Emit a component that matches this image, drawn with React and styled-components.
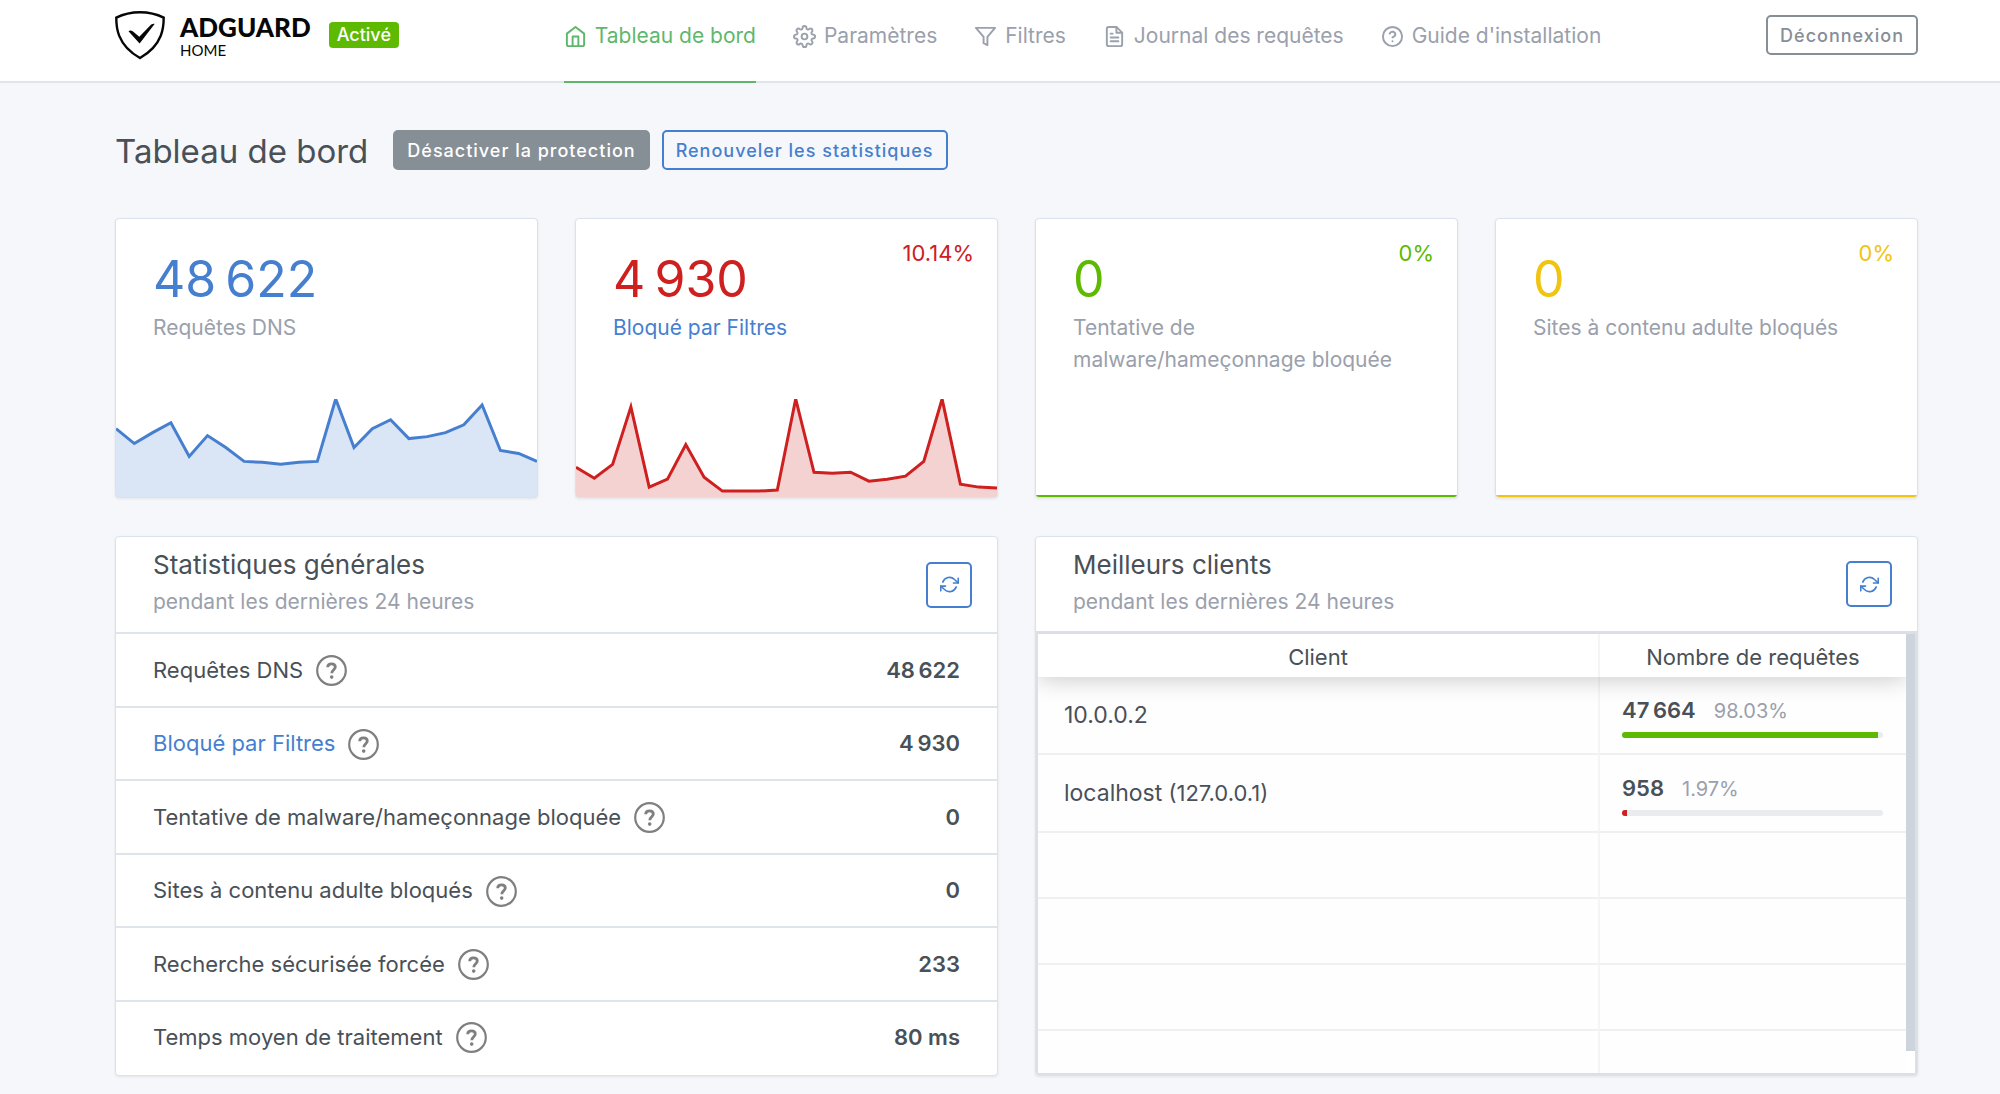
import React, { Fragment } from 'react';
import styled, { createGlobalStyle } from 'styled-components';
import { FiHome, FiSettings, FiFilter, FiFileText, FiHelpCircle, FiRefreshCw } from 'react-icons/fi';

const GlobalStyle = createGlobalStyle`
  * {
    box-sizing: border-box;
  }
  body {
    margin: 0;
    background: #f5f7fb;
    color: #495057;
    font-family: Inter, "Liberation Sans", sans-serif;
    font-size: 21px;
    line-height: 32px;
  }
  a {
    color: #467fcf;
    text-decoration: none;
  }
  button {
    font-family: inherit;
    cursor: pointer;
  }
  h1, h2, p {
    margin: 0;
    font-weight: 400;
  }
`;

const Header = styled.header`
  display: flex;
  justify-content: space-between;
  padding: 0 82px 0 115px;
  background: #fff;
  border-bottom: 2px solid #dfe4ed;
`;

const Brand = styled.div`
  display: flex;
  align-items: center;
  align-self: flex-start;
  height: 70px;
`;

const BrandName = styled.div`
  display: flex;
  flex-direction: column;
  margin: 0 18px 0 15px;
  padding-top: 4px;
  font-family: Lato, sans-serif;
  color: #060606;
`;

const BrandTitle = styled.span`
  font-size: 26px;
  font-weight: 900;
  line-height: 26px;
`;

const BrandSub = styled.span`
  font-size: 15px;
  line-height: 20px;
`;

const Badge = styled.span`
  padding: 0 8px;
  border-radius: 4px;
  background: #5eba00;
  color: #fff;
  font-size: 18px;
  font-weight: 500;
  line-height: 26px;
`;

const Nav = styled.nav`
  display: flex;
  gap: 37px;
`;

const NavLink = styled.a`
  display: flex;
  align-items: center;
  gap: 8px;
  margin-bottom: -2px;
  padding: 20px 0 29px;
  border-bottom: 2px solid ${props => (props.$active ? '#5fb76c' : 'transparent')};
  color: ${props => (props.$active ? '#5fb76c' : '#9aa0ac')};
`;

const buttonColors = {
  gray: 'background: #868e96; border-color: #868e96; color: #fff;',
  grayOutline: 'background: transparent; border-color: #868e96; color: #868e96;',
  blueOutline: 'background: transparent; border-color: #467fcf; color: #467fcf;',
};

const Button = styled.button`
  height: 40px;
  padding: 0 12px;
  border: 2px solid;
  border-radius: 5px;
  font-size: 18px;
  font-weight: 500;
  letter-spacing: 1px;
  ${props => buttonColors[props.$kind]}
`;

const LogoutWrap = styled.div`
  display: flex;
  align-items: center;
  height: 70px;
`;

const Main = styled.main`
  padding: 45px 82px 20px 115px;
`;

const PageHeader = styled.div`
  display: flex;
  align-items: center;
  gap: 12px;
  margin-bottom: 46px;
`;

const PageTitle = styled.h1`
  margin-right: 13px;
  padding-top: 2px;
  font-size: 33px;
  line-height: 42px;
`;

const Cards = styled.div`
  display: grid;
  grid-template-columns: repeat(4, 1fr);
  gap: 37px;
  margin-bottom: 38px;
`;

const Card = styled.section`
  display: flex;
  flex-direction: column;
  min-width: 0;
  overflow: hidden;
  background: #fff;
  border: 1px solid #dce2ec;
  border-radius: 4px;
  box-shadow: 0 1px 3px rgba(0, 0, 0, 0.08);
`;

const StatCard = styled(Card)`
  position: relative;
  min-height: 280px;
`;

const StatBody = styled.div`
  padding: 34px 37px 0;
`;

const StatValue = styled.div`
  color: ${props => props.$color};
  font-size: 50px;
  line-height: 52px;
`;

const StatLabel = styled.p`
  margin-top: 7px;
  color: #9aa0ac;
`;

const StatPercent = styled.div`
  position: absolute;
  top: 18px;
  right: 23px;
  color: ${props => props.$color};
  font-size: 22px;
`;

const ChartSvg = styled.svg`
  display: block;
  width: 100%;
  height: 98px;
  margin-top: auto;
`;

const Panels = styled.div`
  display: grid;
  grid-template-columns: repeat(2, 1fr);
  gap: 37px;
`;

const PanelHeader = styled.div`
  display: flex;
  align-items: center;
  justify-content: space-between;
  height: ${props => (props.$short ? '94px' : '95px')};
  padding: 0 25px 0 37px;
`;

const PanelTitle = styled.h2`
  margin-top: -5px;
  font-size: 26px;
  line-height: 40px;
`;

const PanelSub = styled.p`
  color: #9aa0ac;
  line-height: 34px;
`;

const RefreshButton = styled.button`
  display: flex;
  align-items: center;
  justify-content: center;
  width: 46px;
  height: 46px;
  padding: 0;
  background: #fff;
  border: 2px solid #467fcf;
  border-radius: 5px;
  color: #467fcf;
`;

const StatsTable = styled.table`
  width: 100%;
  height: 440px;
  border-collapse: collapse;
  font-size: 22px;

  th, td {
    padding: 0 37px;
    border-top: 2px solid #dfe4ea;
  }
  th {
    font-weight: 400;
    text-align: left;
  }
  td {
    font-weight: 600;
    text-align: right;
  }
`;

const StatName = styled.div`
  display: flex;
  align-items: center;
  gap: 13px;

  svg {
    margin-top: 2px;
  }
`;

const TableBox = styled.div`
  display: flex;
  flex: 1;
  border: 2px solid #dcdfe4;
  border-top-width: 3px;
`;

const ClientsTable = styled.table`
  flex: 1;
  width: 100%;
  border-spacing: 0;
  table-layout: fixed;
  background: #fefefe;
  font-size: 22px;
  /* keeps the header shadow inside the table */
  clip-path: inset(0);

  thead {
    position: relative;
    background: #fff;
    box-shadow: 0 3px 23px rgba(0, 0, 0, 0.2);
  }
  th {
    height: 43px;
    padding: 2px 0 0;
    font-weight: 400;
  }
  th:last-child {
    width: 308px;
  }
  th + th, td + td {
    border-left: 2px solid #f5f5f5;
  }
  td {
    height: 66px;
    padding: 0 23px 0 26px;
    border-bottom: 2px solid #f0f0f0;
  }
  td + td {
    padding-left: 22px;
  }
  tbody tr:last-child td {
    height: 42px;
    border-bottom: 0;
  }
`;

const ClientRow = styled.tr`
  td {
    height: 78px;
  }
`;

const ClientName = styled.span`
  font-size: 23px;
`;

const Counter = styled.div`
  display: flex;
  align-items: baseline;
  gap: 18px;
  padding-top: 2px;
  line-height: 30px;

  strong {
    font-weight: 600;
  }
`;

const Percent = styled.span`
  color: #9aa0ac;
  font-size: 20px;
`;

const Track = styled.div`
  height: 6px;
  margin-top: 6px;
  overflow: hidden;
  border-radius: 3px;
  background: #e9ecef;
`;

const Bar = styled.div`
  height: 100%;
  background: ${props => props.$color};
`;

const ScrollTrack = styled.div`
  width: 9px;
  background: #fff;
`;

const ScrollThumb = styled.div`
  height: 95%;
  background: #cdd4dc;
`;

const navItems = [
  { title: 'Tableau de bord', icon: FiHome, active: true },
  { title: 'Paramètres', icon: FiSettings },
  { title: 'Filtres', icon: FiFilter },
  { title: 'Journal des requêtes', icon: FiFileText },
  { title: "Guide d'installation", icon: FiHelpCircle },
];

// chart points are distances from the top of the chart, one per hour
const flat = new Array(24).fill(98.5);
const cards = [
  {
    value: '48\u202f622',
    label: 'Requêtes DNS',
    color: '#467fcf',
    points: [30, 45, 34, 24, 58, 37, 49, 63, 64, 66, 64, 63, 0, 49, 30, 21, 40, 38, 34, 26, 6, 52, 55, 63],
  },
  {
    value: '4\u202f930',
    label: <a href="#filters">Bloqué par Filtres</a>,
    color: '#cd201f',
    percent: '10.14%',
    points: [69, 80, 66, 8, 89, 81, 46, 79, 93, 93, 93, 92, 0, 74, 75, 74, 83, 81, 78, 63, 0, 86, 89, 90],
  },
  {
    value: '0',
    label: 'Tentative de malware/hameçonnage bloquée',
    color: '#5eba00',
    percent: '0%',
    points: flat,
  },
  {
    value: '0',
    label: 'Sites à contenu adulte bloqués',
    color: '#f1c40f',
    percent: '0%',
    points: flat,
  },
];

const stats = [
  { name: 'Requêtes DNS', value: '48\u202f622' },
  { name: 'Bloqué par Filtres', value: '4\u202f930', link: '#filters' },
  { name: 'Tentative de malware/hameçonnage bloquée', value: '0' },
  { name: 'Sites à contenu adulte bloqués', value: '0' },
  { name: 'Recherche sécurisée forcée', value: '233' },
  { name: 'Temps moyen de traitement', value: '80 ms' },
];

const clients = [
  { ip: '10.0.0.2', count: '47\u202f664', percent: 98.03, color: '#5eba00' },
  { name: 'localhost', ip: '127.0.0.1', count: '958', percent: 1.97, color: '#cd201f' },
];

const Logo = () => (
  <svg width="50" height="50" viewBox="0 0 50 50" aria-hidden="true">
    <path
      d="M25 2.2C17 2.2 8.500 4 1.300 7.600C1.300 15 0.900 34.500 25 48C49 34.500 48.700 15 48.700 7.600C41.500 4 33 2.200 25 2.200Z"
      fill="none"
      stroke="#060606"
      strokeWidth="2.400"
    />
    <path d="M24.600 33.500L13.500 21.300C14.600 20.200 16.500 20.200 18 21.500L24.300 26.700L35 15.700C36.600 14.200 38 13.500 39.600 14Z" fill="#060606" />
  </svg>
);

const HelpIcon = () => (
  <svg width="31" height="31" viewBox="0 0 31 31" fill="none" stroke="#7f7f7f" role="img" aria-label="Aide">
    <circle cx="15.500" cy="15.500" r="14.300" strokeWidth="2.200" />
    <path d="M11.700 12.300C11.700 10 13.200 8.900 15.500 8.900C17.800 8.900 19.300 10.200 19.300 12.100C19.300 14.600 15.800 15 15.800 18.200" strokeWidth="2.800" />
    <circle cx="15.700" cy="22.100" r="1.800" fill="#7f7f7f" stroke="none" />
  </svg>
);

const Chart = ({ points, color }) => {
  const step = 421 / (points.length - 1);
  const line = points.map((y, i) => `${(i * step).toFixed(1)},${y}`).join(' ');
  return (
    <ChartSvg viewBox="0 0 421 99" preserveAspectRatio="none" aria-hidden="true">
      <polygon points={`0,99 ${line} 421,99`} fill={color} fillOpacity="0.2" />
      <polyline points={line} fill="none" stroke={color} strokeWidth="3" />
    </ChartSvg>
  );
};

const Refresh = () => (
  <RefreshButton type="button" aria-label="Actualiser">
    <FiRefreshCw size={19} />
  </RefreshButton>
);

class App extends React.Component {
  renderHeader = () => (
    <Header>
      <Brand>
        <Logo />
        <BrandName>
          <BrandTitle>ADGUARD</BrandTitle>
          <BrandSub>HOME</BrandSub>
        </BrandName>
        <Badge>Activé</Badge>
      </Brand>
      <Nav>
        {navItems.map(({ title, icon: Icon, active }) => (
          <NavLink key={title} href="#" $active={active}>
            <Icon size={23} />
            {title}
          </NavLink>
        ))}
      </Nav>
      <LogoutWrap>
        <Button type="button" $kind="grayOutline">Déconnexion</Button>
      </LogoutWrap>
    </Header>
  )

  renderStats = () => (
    <Card>
      <PanelHeader>
        <div>
          <PanelTitle>Statistiques générales</PanelTitle>
          <PanelSub>pendant les dernières 24 heures</PanelSub>
        </div>
        <Refresh />
      </PanelHeader>
      <StatsTable>
        <tbody>
          {stats.map(row => (
            <tr key={row.name}>
              <th scope="row">
                <StatName>
                  {row.link ? <a href={row.link}>{row.name}</a> : row.name}
                  <HelpIcon />
                </StatName>
              </th>
              <td>{row.value}</td>
            </tr>
          ))}
        </tbody>
      </StatsTable>
    </Card>
  )

  renderClients = () => (
    <Card>
      <PanelHeader $short>
        <div>
          <PanelTitle>Meilleurs clients</PanelTitle>
          <PanelSub>pendant les dernières 24 heures</PanelSub>
        </div>
        <Refresh />
      </PanelHeader>
      <TableBox>
        <ClientsTable>
          <thead>
            <tr>
              <th scope="col">Client</th>
              <th scope="col">Nombre de requêtes</th>
            </tr>
          </thead>
          <tbody>
            {clients.map(client => (
              <ClientRow key={client.ip}>
                <td>
                  {client.name ? (
                    <Fragment>
                      <ClientName>{client.name}</ClientName> ({client.ip})
                    </Fragment>
                  ) : <ClientName>{client.ip}</ClientName>}
                </td>
                <td>
                  <Counter>
                    <strong>{client.count}</strong>
                    <Percent>{client.percent}%</Percent>
                  </Counter>
                  <Track>
                    <Bar $color={client.color} style={{ width: `${client.percent}%` }} />
                  </Track>
                </td>
              </ClientRow>
            ))}
            {/* empty rows pad the table */}
            {[1, 2, 3, 4].map(n => (
              <tr key={n}>
                <td />
                <td />
              </tr>
            ))}
          </tbody>
        </ClientsTable>
        <ScrollTrack>
          <ScrollThumb />
        </ScrollTrack>
      </TableBox>
    </Card>
  )

  render() {
    return (
      <Fragment>
        <GlobalStyle />
        {this.renderHeader()}
        <Main>
          <PageHeader>
            <PageTitle>Tableau de bord</PageTitle>
            <Button type="button" $kind="gray">Désactiver la protection</Button>
            <Button type="button" $kind="blueOutline">Renouveler les statistiques</Button>
          </PageHeader>
          <Cards>
            {cards.map(card => (
              <StatCard key={card.color}>
                <StatBody>
                  <StatValue $color={card.color}>{card.value}</StatValue>
                  <StatLabel>{card.label}</StatLabel>
                </StatBody>
                {card.percent && <StatPercent $color={card.color}>{card.percent}</StatPercent>}
                <Chart points={card.points} color={card.color} />
              </StatCard>
            ))}
          </Cards>
          <Panels>
            {this.renderStats()}
            {this.renderClients()}
          </Panels>
        </Main>
      </Fragment>
    );
  }
}

export default App;
